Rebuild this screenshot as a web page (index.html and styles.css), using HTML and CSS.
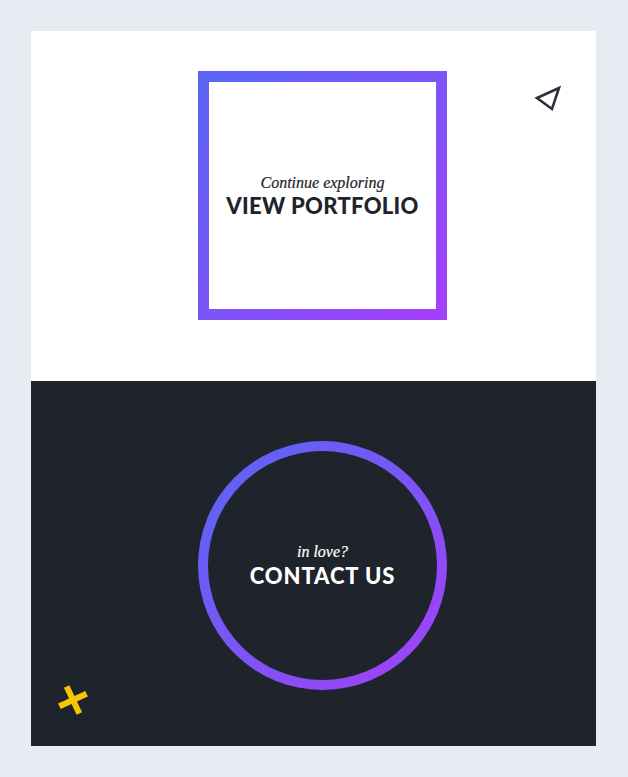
FILE: index.html
```html
<!DOCTYPE html>
<html>
<head>
<meta charset="utf-8">
<link rel="stylesheet" href="styles.css">
</head>
<body>
<div class="card">
  <section class="panel panel-light">
    <a class="cta cta-square" href="#">
      <span class="cta-inner">
        <span class="cta-kicker">Continue exploring</span>
        <span class="cta-title">VIEW PORTFOLIO</span>
      </span>
    </a>
    <svg class="deco-triangle" width="30" height="30" viewBox="0 0 30 30">
      <polygon points="3,13 25,3 18,24" fill="none" stroke="#2d313c" stroke-width="2.6" stroke-linejoin="miter"/>
    </svg>
  </section>
  <section class="panel panel-dark">
    <a class="cta cta-circle" href="#">
      <span class="cta-inner">
        <span class="cta-kicker">in love?</span>
        <span class="cta-title">CONTACT US</span>
      </span>
    </a>
    <span class="deco-cross"></span>
  </section>
</div>
</body>
</html>
```
FILE: styles.css
```css
html, body {
  margin: 0;
  padding: 0;
}
body {
  background: #e7ebf2;
  width: 628px;
  height: 777px;
  overflow: hidden;
}
.card {
  margin: 31px 0 0 31px;
  width: 565px;
}
.panel {
  position: relative;
  box-sizing: border-box;
  display: flex;
  padding-left: 167px;
}
.panel-light {
  background: #ffffff;
  height: 350px;
  padding-top: 40px;
}
.panel-dark {
  background: #1f232b;
  height: 365px;
  padding-top: 60px;
}
.cta {
  display: block;
  box-sizing: border-box;
  width: 249px;
  height: 249px;
  padding: 11px;
  text-decoration: none;
  background: linear-gradient(135deg, #5966f4 0%, #7b55f7 50%, #a63ef9 100%);
}
.cta-circle {
  border-radius: 50%;
  padding: 10px;
}
.cta-inner {
  display: flex;
  flex-direction: column;
  align-items: center;
  justify-content: center;
  width: 100%;
  height: 100%;
  background: #ffffff;
  box-sizing: border-box;
}
.cta-circle .cta-inner {
  background: #1f232b;
  border-radius: 50%;
}
.cta-kicker {
  font-family: "Liberation Serif", "Times New Roman", serif;
  font-style: italic;
  font-size: 16px;
  line-height: 18px;
  color: #1f232b;
  -webkit-text-stroke: 0.2px currentColor;
}
.cta-title {
  font-family: "Lato", "Noto Sans", sans-serif;
  font-weight: 900;
  font-size: 22px;
  line-height: 24px;
  letter-spacing: 0.3px;
  margin-top: 2px;
  color: #1f232b;
}
.cta-circle .cta-kicker,
.cta-circle .cta-title {
  color: #ffffff;
}
.cta-circle .cta-title {
  letter-spacing: 0.9px;
  margin-top: 3px;
}
.deco-triangle {
  position: absolute;
  left: 503px;
  top: 54px;
}
.deco-cross {
  position: absolute;
  left: 27px;
  top: 304px;
  width: 30px;
  height: 30px;
  transform: rotate(-25deg);
}
.deco-cross::before,
.deco-cross::after {
  content: "";
  position: absolute;
  background: #f6c700;
}
.deco-cross::before {
  left: 12px;
  top: 0;
  width: 6px;
  height: 30px;
}
.deco-cross::after {
  left: 0;
  top: 12px;
  width: 30px;
  height: 6px;
}
```
